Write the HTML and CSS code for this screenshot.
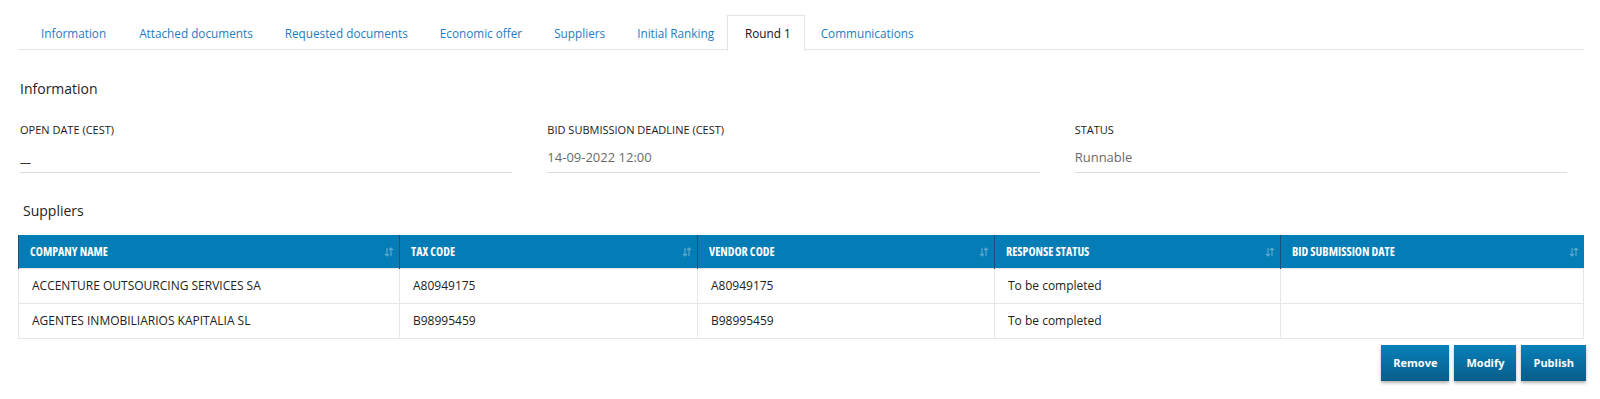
FILE: index.html
```html
<!DOCTYPE html>
<html>
<head>
<meta charset="utf-8">
<link rel="stylesheet" href="styles.css">
</head>
<body>
<div class="page">
  <ul class="tabs">
    <li class="tab">Information</li>
    <li class="tab">Attached documents</li>
    <li class="tab">Requested documents</li>
    <li class="tab">Economic offer</li>
    <li class="tab">Suppliers</li>
    <li class="tab">Initial Ranking</li>
    <li class="tab active">Round 1</li>
    <li class="tab">Communications</li>
  </ul>

  <section class="info">
    <h2 class="section-title">Information</h2>
    <div class="fields">
      <div class="field">
        <div class="label">OPEN DATE (CEST)</div>
        <div class="value dark"><span class="dash">—</span></div>
      </div>
      <div class="field">
        <div class="label">BID SUBMISSION DEADLINE (CEST)</div>
        <div class="value">14-09-2022 12:00</div>
      </div>
      <div class="field">
        <div class="label">STATUS</div>
        <div class="value">Runnable</div>
      </div>
    </div>
  </section>

  <section class="suppliers">
    <h2 class="section-title sup">Suppliers</h2>
    <table class="grid">
      <colgroup>
        <col class="c1"><col class="c2"><col class="c3"><col class="c4"><col>
      </colgroup>
      <thead>
        <tr>
          <th><span>COMPANY NAME</span><svg class="sort" viewBox="0 0 10 10"><path d="M3 1v8M1 7l2 2 2-2M7 9V1M5 3l2-2 2 2"/></svg></th>
          <th><span>TAX CODE</span><svg class="sort" viewBox="0 0 10 10"><path d="M3 1v8M1 7l2 2 2-2M7 9V1M5 3l2-2 2 2"/></svg></th>
          <th><span>VENDOR CODE</span><svg class="sort" viewBox="0 0 10 10"><path d="M3 1v8M1 7l2 2 2-2M7 9V1M5 3l2-2 2 2"/></svg></th>
          <th><span>RESPONSE STATUS</span><svg class="sort" viewBox="0 0 10 10"><path d="M3 1v8M1 7l2 2 2-2M7 9V1M5 3l2-2 2 2"/></svg></th>
          <th><span>BID SUBMISSION DATE</span><svg class="sort" viewBox="0 0 10 10"><path d="M3 1v8M1 7l2 2 2-2M7 9V1M5 3l2-2 2 2"/></svg></th>
        </tr>
      </thead>
      <tbody>
        <tr>
          <td>ACCENTURE OUTSOURCING SERVICES SA</td>
          <td>A80949175</td>
          <td>A80949175</td>
          <td>To be completed</td>
          <td></td>
        </tr>
        <tr>
          <td>AGENTES INMOBILIARIOS KAPITALIA SL</td>
          <td>B98995459</td>
          <td>B98995459</td>
          <td>To be completed</td>
          <td></td>
        </tr>
      </tbody>
    </table>
    <div class="actions">
      <button class="btn">Remove</button>
      <button class="btn">Modify</button>
      <button class="btn">Publish</button>
    </div>
  </section>
</div>
</body>
</html>
```

FILE: styles.css
```css
* { box-sizing: border-box; }
html, body { margin: 0; padding: 0; background: #fff; }
body {
  font-family: "Open Sans", "Noto Sans", sans-serif;
  color: #222;
  width: 1600px;
  height: 399px;
  overflow: hidden;
}
.page { padding: 15px 16px 0 18px; }

.tabs {
  list-style: none;
  margin: 0;
  padding: 0 0 0 6px;
  display: flex;
  border-bottom: 1px solid #e6e6e6;
  height: 35px;
}
.tab {
  padding: 0 15px;
  height: 35px;
  line-height: 35px;
  font-size: 11.75px;
  color: #1f7cbf;
  border: 1px solid transparent;
  border-bottom: none;
  white-space: nowrap;
}
.tab:first-child { padding-left: 16px; }
.tab:nth-child(2) { padding-left: 16px; }
.tab.active {
  color: #111;
  border-color: #e3e3e3;
  background: #fff;
  height: 36px;
  padding: 0 13px 0 17px;
  margin-left: -3px;
  line-height: 34px;
}

.info { padding: 29px 17px 0 2px; }
.section-title {
  margin: 0;
  font-size: 14px;
  font-weight: 500;
  line-height: 20px;
  color: #222;
}
.fields {
  display: grid;
  grid-template-columns: 1fr 1fr 1fr;
  column-gap: 35px;
  margin-top: 23px;
}
.label {
  font-size: 11px;
  line-height: 16px;
  color: #1a1a1a;
}
.value {
  margin-top: 9px;
  font-size: 13px;
  line-height: 20px;
  height: 26px;
  color: #6b6b6b;
  padding-bottom: 5px;
  border-bottom: 1px solid #dcdcdc;
}
.value.dark { color: #333; }
.dash { display: inline-block; font-size: 11px; transform: translateY(4px); }

.suppliers { padding-top: 28px; }
.section-title.sup { padding-left: 5px; }

.grid {
  margin-top: 14px;
  width: 100%;
  border-collapse: collapse;
  table-layout: fixed;
}
.c1 { width: 381px; }
.c2 { width: 298px; }
.c3 { width: 297px; }
.c4 { width: 286px; }
.grid th {
  background: #047cb6;
  color: #fff;
  height: 33px;
  padding: 0 6px 0 11px;
  text-align: left;
  font-size: 12px;
  font-weight: 700;
  font-stretch: 87%;
  border-left: 1px solid #1d4f72;
  position: relative;
}
.grid th span { vertical-align: middle; }
.sort {
  position: absolute;
  right: 5px;
  top: 12px;
  width: 10px;
  height: 10px;
  fill: none;
  stroke: rgba(255,255,255,0.35);
  stroke-width: 1.2;
}
.grid td {
  height: 35px;
  padding: 0 12px 0 13px;
  font-size: 12px;
  color: #222;
  border: 1px solid #e6e6e6;
  white-space: nowrap;
}

.actions {
  display: flex;
  justify-content: flex-end;
  gap: 5px;
  margin-top: 6px;
  margin-right: -2px;
}
.btn {
  height: 36px;
  padding: 0 12px;
  border: none;
  color: #fff;
  font-family: "Open Sans", sans-serif;
  font-size: 11px;
  font-weight: 700;
  background: linear-gradient(#0980ba, #075d89);
  box-shadow: 0 2px 3px rgba(0,0,0,0.3);
  cursor: pointer;
}
```
